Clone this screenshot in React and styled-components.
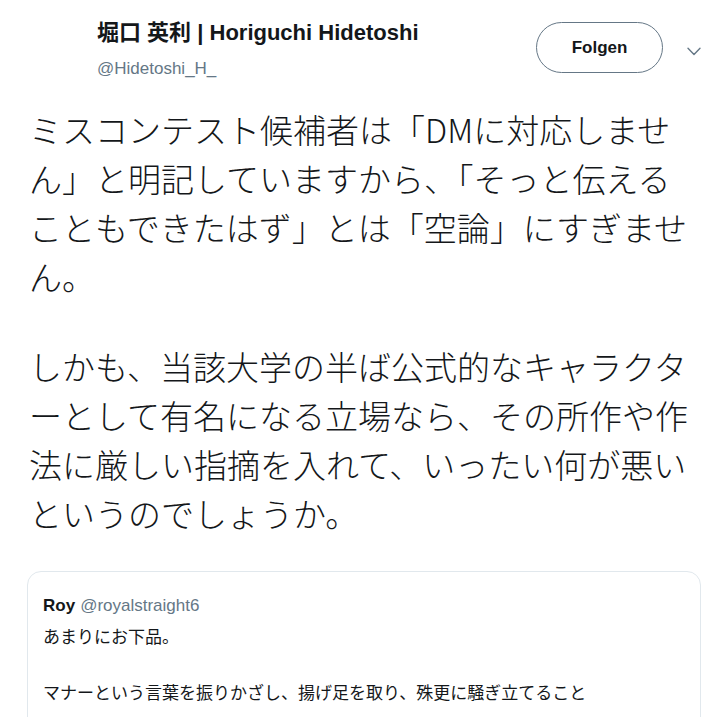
import React from 'react';
import { styled, createGlobalStyle } from 'styled-components';

const GlobalStyle = createGlobalStyle`
  html, body {
    margin: 0;
    padding: 0;
    background: #ffffff;
  }
  body {
    font-family: "Liberation Sans", "Noto Sans CJK JP", sans-serif;
    color: #14171a;
  }
`;

const tweet = {
  name: '堀口 英利 | Horiguchi Hidetoshi',
  handle: '@Hidetoshi_H_',
  paragraphs: [
    'ミスコンテスト候補者は「DMに対応しません」と明記していますから、「そっと伝えることもできたはず」とは「空論」にすぎません。',
    'しかも、当該大学の半ば公式的なキャラクターとして有名になる立場なら、その所作や作法に厳しい指摘を入れて、いったい何が悪いというのでしょうか。',
  ],
  quote: {
    name: 'Roy',
    handle: '@royalstraight6',
    lines: ['あまりにお下品。', '', 'マナーという言葉を振りかざし、揚げ足を取り、殊更に騒ぎ立てること'],
  },
};

const App = () => {
  return (
    <Page>
      <GlobalStyle />
      <Header>
        <NameBlock>
          <Name>{tweet.name}</Name>
          <Handle>{tweet.handle}</Handle>
        </NameBlock>
        <FollowButton>Folgen</FollowButton>
        <Caret aria-hidden="true">
          <svg width="14" height="9" viewBox="0 0 14 9" fill="none">
            <path d="M1 1.2 L7 7.5 L13 1.2" stroke="#657786" strokeWidth="1.4" strokeLinecap="round" strokeLinejoin="round" />
          </svg>
        </Caret>
      </Header>
      <TweetText>
        {tweet.paragraphs.map((p, i) => (
          <Paragraph key={i}>{p}</Paragraph>
        ))}
      </TweetText>
      <QuoteCard>
        <QuoteHeader>
          <QuoteName>{tweet.quote.name}</QuoteName>
          <QuoteHandle>{tweet.quote.handle}</QuoteHandle>
        </QuoteHeader>
        <QuoteBody>
          {tweet.quote.lines.map((line, i) => (
            <QuoteLine key={i}>{line || '\u00a0'}</QuoteLine>
          ))}
        </QuoteBody>
      </QuoteCard>
    </Page>
  );
};

export default App;

const Page = styled.div`
  width: 717px;
  height: 717px;
  overflow: hidden;
  background: #ffffff;
`;

const Header = styled.header`
  display: flex;
  align-items: flex-start;
  padding: 20px 16px 0 97px;
`;

const NameBlock = styled.div`
  display: flex;
  flex-direction: column;
`;

const Name = styled.div`
  font-size: 22px;
  line-height: 26px;
  font-weight: 700;
  color: #14171a;
  white-space: nowrap;
`;

const Handle = styled.div`
  margin-top: 12px;
  font-size: 17px;
  line-height: 22px;
  color: #657786;
`;

const FollowButton = styled.button`
  margin-left: auto;
  margin-top: 2px;
  width: 127px;
  height: 51px;
  border: 1px solid #657786;
  border-radius: 26px;
  background: #ffffff;
  color: #14171a;
  font-family: "Liberation Sans", sans-serif;
  font-size: 17px;
  font-weight: 700;
`;

const Caret = styled.span`
  display: flex;
  margin-left: 24px;
  margin-top: 27px;
`;

const TweetText = styled.div`
  margin-top: 25px;
  padding: 0 20px 0 29px;
  font-family: "Noto Sans CJK JP", sans-serif;
  font-weight: 300;
  font-size: 33px;
  line-height: 49px;
  color: #14171a;
  line-break: normal;
`;

const Paragraph = styled.p`
  margin: 0 0 41px;

  &:last-child {
    margin-bottom: 0;
  }
`;

const QuoteCard = styled.div`
  margin: 33px 16px 0 27px;
  padding: 23px 15px 0 15px;
  border: 1px solid #e1e8ed;
  border-radius: 14px;
  height: 200px;
`;

const QuoteHeader = styled.div`
  display: flex;
  gap: 5px;
  font-size: 17px;
  line-height: 22px;
`;

const QuoteName = styled.span`
  font-weight: 700;
  color: #14171a;
`;

const QuoteHandle = styled.span`
  color: #657786;
`;

const QuoteBody = styled.div`
  margin-top: 5px;
  font-family: "Noto Sans CJK JP", sans-serif;
  font-weight: 400;
  font-size: 17px;
  line-height: 28px;
  color: #14171a;
`;

const QuoteLine = styled.div``;
